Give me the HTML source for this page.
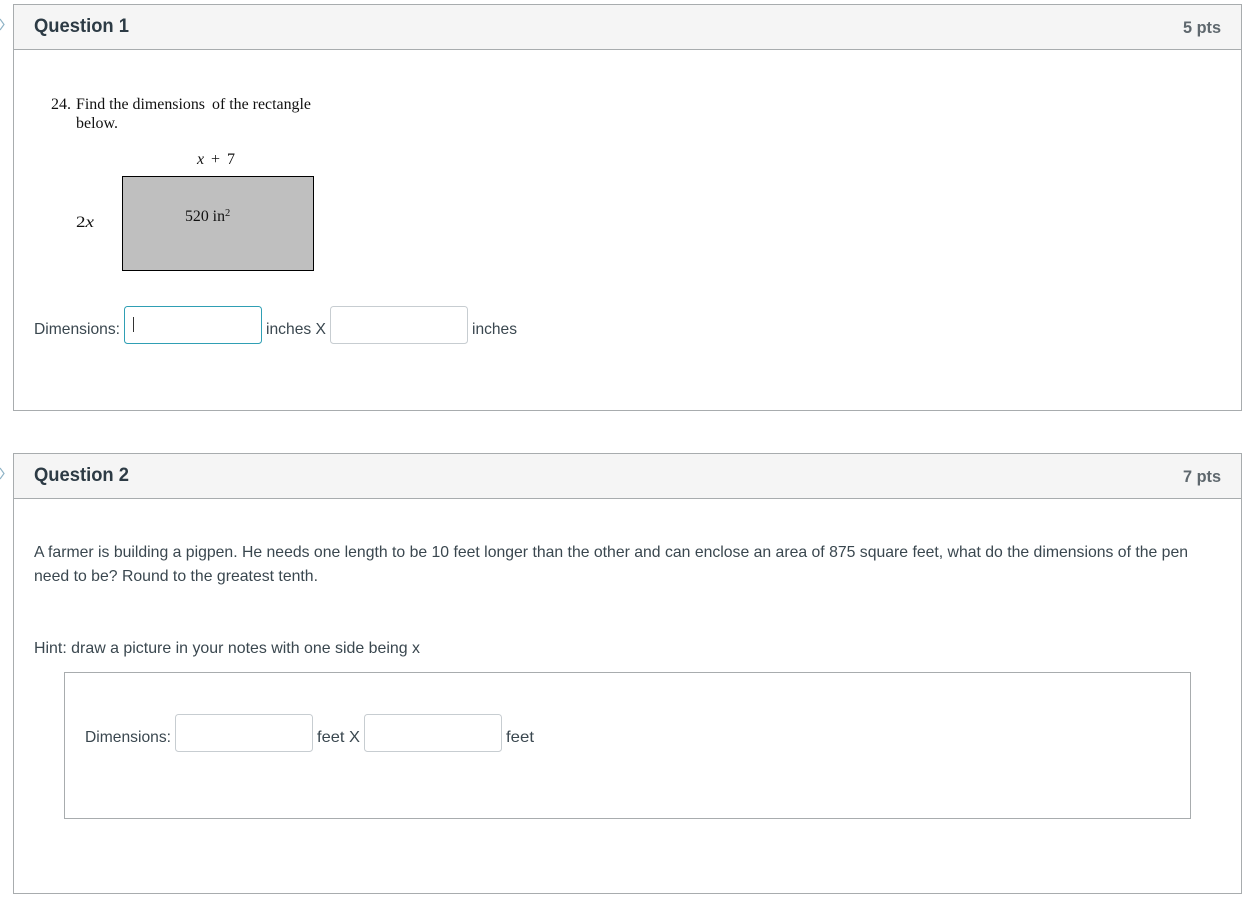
<!DOCTYPE html>
<html><head><meta charset="utf-8"><style>
html,body{margin:0;padding:0;background:#fff;width:1254px;height:905px;overflow:hidden}
svg{display:block}
.l{font-family:"Liberation Sans",sans-serif;font-size:16px;fill:#3a474f}
.h{font-family:"Liberation Sans",sans-serif;font-size:19px;font-weight:bold;fill:#2d3b45}
.p{font-family:"Liberation Sans",sans-serif;font-size:17px;font-weight:bold;fill:#5f686e}
.s{font-family:"Liberation Serif",serif;font-size:16px;fill:#111}
.i{font-style:italic}
</style></head><body>
<svg width="1254" height="905" viewBox="0 0 1254 905" xmlns="http://www.w3.org/2000/svg">
<g fill="none" stroke="#a8acae">
<rect x="13.5" y="4.5" width="1228" height="406"/>
<rect x="13.5" y="453.5" width="1228" height="440"/>
</g>
<rect x="14" y="5" width="1227" height="44" fill="#f5f5f5"/>
<rect x="14" y="454" width="1227" height="44" fill="#f5f5f5"/>
<path d="M14 49.5H1241M14 498.5H1241" stroke="#a8acae" fill="none"/>
<path d="M0 19l4 5.500L0 30M0 468l4 5.500L0 479" stroke="#8fb3c6" stroke-width="1.200" fill="none"/>

<text class="h" x="34" y="32" textLength="95" lengthAdjust="spacingAndGlyphs">Question 1</text>
<text class="p" x="1183" y="33" textLength="38" lengthAdjust="spacingAndGlyphs">5 pts</text>
<text class="h" x="34" y="481" textLength="95" lengthAdjust="spacingAndGlyphs">Question 2</text>
<text class="p" x="1183" y="482" textLength="38" lengthAdjust="spacingAndGlyphs">7 pts</text>

<text class="s" x="51" y="109" textLength="20" lengthAdjust="spacingAndGlyphs">24.</text>
<text class="s" x="76" y="109" textLength="129" lengthAdjust="spacingAndGlyphs">Find the dimensions</text>
<text class="s" x="212" y="109" textLength="99" lengthAdjust="spacingAndGlyphs">of the rectangle</text>
<text class="s" x="76" y="128" textLength="42" lengthAdjust="spacingAndGlyphs">below.</text>
<text class="s" x="197" y="164" textLength="38" lengthAdjust="spacing"><tspan class="i">x</tspan> + 7</text>
<text class="s" x="76" y="227" textLength="18" lengthAdjust="spacingAndGlyphs">2<tspan class="i">x</tspan></text>
<rect x="122.500" y="176.500" width="191" height="94" fill="#bfbfbf" stroke="#000"/>
<text class="s" x="185" y="221" textLength="40" lengthAdjust="spacingAndGlyphs">520 in</text>
<text class="s" x="225" y="216" style="font-size:10.500px">2</text>

<text class="l" x="34" y="334" textLength="86" lengthAdjust="spacingAndGlyphs">Dimensions:</text>
<rect x="124.500" y="306.500" width="137" height="37" rx="3" fill="#fff" stroke="#2f9fb4"/>
<path d="M133.500 317V332" stroke="#333" fill="none"/>
<text class="l" x="266" y="334" textLength="60" lengthAdjust="spacingAndGlyphs">inches X</text>
<rect x="330.500" y="306.500" width="137" height="37" rx="3" fill="#fff" stroke="#c7cdd1"/>
<text class="l" x="472" y="334" textLength="45" lengthAdjust="spacingAndGlyphs">inches</text>

<text class="l" x="34" y="557" textLength="1154" lengthAdjust="spacingAndGlyphs">A farmer is building a pigpen. He needs one length to be 10 feet longer than the other and can enclose an area of 875 square feet, what do the dimensions of the pen</text>
<text class="l" x="34" y="581" textLength="284" lengthAdjust="spacingAndGlyphs">need to be? Round to the greatest tenth.</text>
<text class="l" x="34" y="653" textLength="386" lengthAdjust="spacingAndGlyphs">Hint: draw a picture in your notes with one side being x</text>

<rect x="64.500" y="672.500" width="1126" height="146" fill="#fff" stroke="#a8acae"/>
<text class="l" x="85" y="742" textLength="86" lengthAdjust="spacingAndGlyphs">Dimensions:</text>
<rect x="175.500" y="714.500" width="137" height="37" rx="3" fill="#fff" stroke="#c7cdd1"/>
<text class="l" x="317" y="742" textLength="43" lengthAdjust="spacingAndGlyphs">feet X</text>
<rect x="364.500" y="714.500" width="137" height="37" rx="3" fill="#fff" stroke="#c7cdd1"/>
<text class="l" x="506" y="742" textLength="28" lengthAdjust="spacingAndGlyphs">feet</text>
</svg>
</body></html>
